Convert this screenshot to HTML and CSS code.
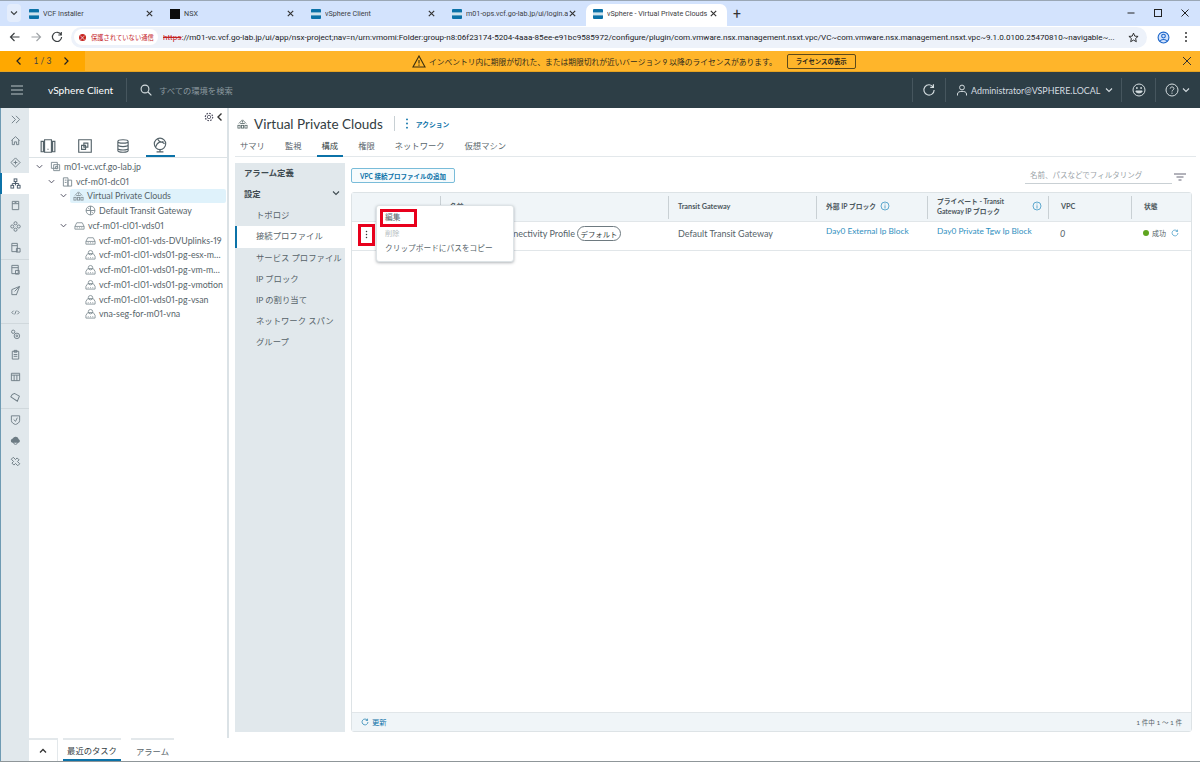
FILE: index.html
```html
<!DOCTYPE html>
<html lang="ja">
<head>
<meta charset="utf-8">
<title>vSphere - Virtual Private Clouds</title>
<link rel="stylesheet" href="styles.css">
</head>
<body>
<svg class="defs" width="0" height="0">
  <symbol id="chev-d" viewBox="0 0 10 10"><path d="M2 3.5 5 6.5 8 3.5" fill="none" stroke="currentColor" stroke-width="1.1"/></symbol>
  <symbol id="net" viewBox="0 0 12 12"><g fill="none" stroke="currentColor" stroke-width=".9"><path d="M2 6 6 2l4 4"/><path d="M3.5 6h5M6 3v2"/><rect x="1" y="8" width="2.4" height="3"/><rect x="4.8" y="8" width="2.4" height="3"/><rect x="8.6" y="8" width="2.4" height="3"/></g></symbol>
  <symbol id="pg" viewBox="0 0 12 12"><g fill="none" stroke="currentColor" stroke-width=".9"><path d="M1 8 3 5h6l2 3v3H1z"/><circle cx="6" cy="4" r="2.4"/><path d="M3 9.5h1M5.5 9.5h1M8 9.5h1"/></g></symbol>
  <symbol id="sw" viewBox="0 0 12 12"><g fill="none" stroke="currentColor" stroke-width=".9"><path d="M1 7 3 3h6l2 4v3H1zM1 7h10M3 8.5h1M5.5 8.5h1M8 8.5h1"/></g></symbol>
  <symbol id="refresh" viewBox="0 0 12 12"><path d="M9.6 3.4A4.4 4.4 0 1 0 10.4 6M9.8 1v2.7H7.1" fill="none" stroke="currentColor" stroke-width="1"/></symbol>
  <symbol id="info" viewBox="0 0 12 12"><g fill="none" stroke="currentColor" stroke-width=".9"><circle cx="6" cy="6" r="4.8"/><path d="M6 5.2V9M6 3v1.1"/></g></symbol>
  <symbol id="close" viewBox="0 0 10 10"><path d="M2 2l6 6M8 2 2 8" fill="none" stroke="currentColor" stroke-width="1.3"/></symbol>
  <symbol id="vmw" viewBox="0 0 10 10"><rect width="10" height="10" rx="1" fill="#0b72a8"/><rect y="3.4" width="10" height="3" fill="#fff" opacity=".8"/></symbol>
</svg>

<div class="tabstrip">
  <span class="tab-list"><svg class="ico10"><use href="#chev-d"/></svg></span>
  <div class="tab"><svg class="fav"><use href="#vmw"/></svg><span class="tab-title">VCF Installer</span><svg class="tab-x"><use href="#close"/></svg></div>
  <div class="tab"><span class="fav fav-nsx"></span><span class="tab-title">NSX</span><svg class="tab-x"><use href="#close"/></svg></div>
  <div class="tab"><svg class="fav"><use href="#vmw"/></svg><span class="tab-title">vSphere Client</span><svg class="tab-x"><use href="#close"/></svg></div>
  <div class="tab"><svg class="fav"><use href="#vmw"/></svg><span class="tab-title">m01-ops.vcf.go-lab.jp/ui/login.a</span><svg class="tab-x"><use href="#close"/></svg></div>
  <div class="tab tab-active"><svg class="fav"><use href="#vmw"/></svg><span class="tab-title">vSphere - Virtual Private Clouds</span><svg class="tab-x"><use href="#close"/></svg></div>
  <span class="tab-new">+</span>
  <div class="win-ctrls">
    <svg class="ico10" viewBox="0 0 10 10"><path d="M1.5 5h7" stroke="#222" fill="none"/></svg>
    <svg class="ico10" viewBox="0 0 10 10"><rect x="1.5" y="1.5" width="7" height="7" fill="none" stroke="#222"/></svg>
    <svg class="ico10" viewBox="0 0 10 10"><path d="M1.5 1.5l7 7M8.5 1.5l-7 7" stroke="#222" fill="none"/></svg>
  </div>
</div>

<div class="addr-row">
  <svg class="nav-ico" viewBox="0 0 12 12"><path d="M10.5 6h-9M5.5 2 1.5 6l4 4" fill="none" stroke="#3c4043" stroke-width="1.2"/></svg>
  <svg class="nav-ico" viewBox="0 0 12 12"><path d="M1.5 6h9M6.5 2l4 4-4 4" fill="none" stroke="#a0a4a8" stroke-width="1.2"/></svg>
  <svg class="nav-ico" viewBox="0 0 12 12"><path d="M10 3.6A4.6 4.6 0 1 0 10.6 6M10.3 1v3H7.3" fill="none" stroke="#3c4043" stroke-width="1.2"/></svg>
  <div class="omnibox">
    <span class="chip"><span class="chip-dot">×</span>保護されていない通信</span>
    <span class="url"><s class="url-s">https</s>://m01-vc.vcf.go-lab.jp/ui/app/nsx-project;nav=n/urn:vmomi:Folder:group-n8:06f23174-5204-4aaa-85ee-e91bc9585972/configure/plugin/com.vmware.nsx.management.nsxt.vpc/VC~com.vmware.nsx.management.nsxt.vpc~9.1.0.0100.25470810~navigable~...</span>
    <svg class="star" viewBox="0 0 12 12"><path d="M6 1.2 7.4 4.5 11 4.8 8.3 7.1 9.1 10.6 6 8.8 2.9 10.6 3.7 7.1 1 4.8 4.6 4.5z" fill="none" stroke="#222" stroke-width="1"/></svg>
  </div>
  <svg class="profile" viewBox="0 0 12 12"><circle cx="6" cy="6" r="5" fill="#d3e3fd" stroke="#1a65c9"/><circle cx="6" cy="4.7" r="1.7" fill="none" stroke="#1a65c9"/><path d="M2.8 9.4C4 7.4 8 7.4 9.2 9.4" fill="none" stroke="#1a65c9"/></svg>
  <svg class="kebab-chrome" viewBox="0 0 4 12"><circle cx="2" cy="2" r="1" fill="#333"/><circle cx="2" cy="6" r="1" fill="#333"/><circle cx="2" cy="10" r="1" fill="#333"/></svg>
</div>

<div class="banner">
  <div class="pager">
    <svg class="ico10" viewBox="0 0 10 10"><path d="M6.5 1.5 3 5l3.5 3.5" fill="none" stroke="#222" stroke-width="1.2"/></svg>
    <span class="pager-num">1 / 3</span>
    <svg class="ico10" viewBox="0 0 10 10"><path d="M3.5 1.5 7 5 3.5 8.5" fill="none" stroke="#222" stroke-width="1.2"/></svg>
  </div>
  <div class="banner-msg">
    <svg class="warn" viewBox="0 0 14 13"><path d="M7 1 13 12H1zM7 5v3.6M7 9.6v1.2" fill="none" stroke="#3a2f10" stroke-width="1.1"/></svg>
    <span>インベントリ内に期限が切れた、または期限切れが近いバージョン 9 以降のライセンスがあります。</span>
    <button class="banner-btn">ライセンスの表示</button>
  </div>
  <svg class="banner-x" viewBox="0 0 10 10"><path d="M1 1l8 8M9 1 1 9" stroke="#333" fill="none" stroke-width="1"/></svg>
</div>

<header class="hdr">
  <svg class="burger" viewBox="0 0 12 10"><path d="M0 1h12M0 5h12M0 9h12" stroke="#c9d2d6" fill="none" stroke-width=".9"/></svg>
  <span class="brand">vSphere Client</span>
  <svg class="hdr-search" viewBox="0 0 12 12"><circle cx="5" cy="5" r="3.9" fill="none" stroke="#d5dde0" stroke-width="1.1"/><path d="M8 8l3.4 3.4" stroke="#d5dde0" stroke-width="1.1"/></svg>
  <span class="hdr-ph">すべての環境を検索</span>
  <span class="hdr-cell hdr-refresh"><svg class="ico14"><use href="#refresh"/></svg></span>
  <span class="hdr-cell hdr-user">
    <svg class="ico12" viewBox="0 0 12 12"><circle cx="6" cy="3.5" r="2.4" fill="none" stroke="currentColor"/><path d="M1.5 11.5V10C1.5 8 3.5 7.4 6 7.4S10.5 8 10.5 10v1.5" fill="none" stroke="currentColor"/></svg>
    <span class="user-name">Administrator@VSPHERE.LOCAL</span>
    <svg class="ico10"><use href="#chev-d"/></svg>
  </span>
  <span class="hdr-cell hdr-smile">
    <svg class="ico14" viewBox="0 0 14 14"><g fill="none" stroke="currentColor"><circle cx="7" cy="7" r="6"/><path d="M3.8 8h6.4C10 10.5 4 10.5 3.8 8z" fill="currentColor"/></g><circle cx="4.9" cy="5" r=".9" fill="currentColor"/><circle cx="9.1" cy="5" r=".9" fill="currentColor"/></svg>
  </span>
  <span class="hdr-help">
    <svg class="ico14" viewBox="0 0 14 14"><circle cx="7" cy="7" r="6" fill="none" stroke="currentColor"/><path d="M5.2 5.6C5.2 3.4 8.9 3.4 8.9 5.5 8.9 7 7 6.9 7 8.5M7 9.6v1.2" fill="none" stroke="currentColor"/></svg>
    <svg class="ico10"><use href="#chev-d"/></svg>
  </span>
</header>

<div class="main">
  <nav class="rail">
    <span class="rail-item rail-toggle"><svg viewBox="0 0 12 12"><path d="M2 2l4 4-4 4M6.5 2l4 4-4 4" fill="none" stroke="currentColor"/></svg></span>
    <span class="rail-item"><svg viewBox="0 0 12 12"><path d="M1.5 6 6 1.8 10.5 6M2.5 5.500V10.500H4.800V7.500H7.200V10.500H9.500V5.500" fill="none" stroke="currentColor"/></svg></span>
    <span class="rail-item"><svg viewBox="0 0 12 12"><path d="M6 1l5 5-5 5-5-5z" fill="none" stroke="currentColor"/><path d="M4 6h4M6 4v4" stroke="currentColor"/></svg></span>
    <span class="rail-item rail-active"><svg viewBox="0 0 12 12"><g fill="none" stroke="#456" stroke-width="1"><rect x="4.5" y="1" width="3" height="3"/><rect x="1" y="8" width="3" height="3"/><rect x="8" y="8" width="3" height="3"/><path d="M6 4v2M2.5 8V6h7v2M6 6v2"/></g></svg></span>
    <span class="rail-item"><svg viewBox="0 0 12 12"><path d="M2.5 1.5h7v9h-7zM2.5 4h7M5 2.8h2" fill="none" stroke="currentColor"/></svg></span>
    <span class="rail-item"><svg viewBox="0 0 12 12"><g fill="none" stroke="currentColor"><circle cx="6" cy="2.5" r="1.7"/><circle cx="6" cy="9.5" r="1.7"/><circle cx="2.5" cy="6" r="1.7"/><circle cx="9.5" cy="6" r="1.7"/></g></svg></span>
    <span class="rail-item"><svg viewBox="0 0 12 12"><path d="M2 1.5h6v9H2zM2 4h6M7 7h4v4H7z" fill="none" stroke="currentColor"/></svg></span>
    <span class="rail-item rail-sep"><svg viewBox="0 0 12 12"><path d="M2 1.5h7v9H2zM2 4h7M6 7h4v4H6z" fill="none" stroke="currentColor"/></svg></span>
    <span class="rail-item"><svg viewBox="0 0 12 12"><path d="M2 5v5.5h5.500M2 5l8.500-3.500L7 10.500M5 7l5-5" fill="none" stroke="currentColor"/></svg></span>
    <span class="rail-item"><svg viewBox="0 0 12 12"><path d="M4 4 2 6l2 2M8 4l2 2-2 2M6.800 4 5.200 8" fill="none" stroke="currentColor"/></svg></span>
    <span class="rail-item rail-sep"><svg viewBox="0 0 12 12"><g fill="none" stroke="currentColor"><circle cx="3.5" cy="3" r="1.8"/><circle cx="7.5" cy="7.5" r="3"/><circle cx="7.5" cy="7.5" r="1"/></g></svg></span>
    <span class="rail-item"><svg viewBox="0 0 12 12"><path d="M2.5 2.5h7v8.500h-7zM4.500 1.500h3v2h-3zM4 6h4M4 8h4" fill="none" stroke="currentColor"/></svg></span>
    <span class="rail-item"><svg viewBox="0 0 12 12"><path d="M1.5 2.5h9v8h-9zM1.500 4.500h9M4.500 4.500v6M7.500 4.500v6" fill="none" stroke="currentColor"/></svg></span>
    <span class="rail-item"><svg viewBox="0 0 12 12"><path d="M1.5 3.5 4 1.500h2.500l4 4.500-4 4.500z" fill="none" stroke="currentColor" transform="rotate(-20 6 6)"/></svg></span>
    <span class="rail-item rail-sep"><svg viewBox="0 0 12 12"><path d="M1.5 2h9v5C10.500 9.500 8 10.800 6 11.500 4 10.800 1.500 9.500 1.500 7zM4 6l2 2 2-4" fill="none" stroke="currentColor"/></svg></span>
    <span class="rail-item"><svg viewBox="0 0 12 12"><path d="M2.5 8.5A2.500 2.500 0 0 1 3 3.700 3.500 3.500 0 0 1 9.500 4.500 2.200 2.200 0 0 1 9.500 8.500z" fill="currentColor"/><circle cx="6" cy="8" r="2.2" fill="none" stroke="currentColor"/></svg></span>
    <span class="rail-item"><svg viewBox="0 0 12 12"><path d="M4.5 2h3v2.500H11v3H7.500V10h-3V7.500H1v-3h3.500z" fill="none" stroke="currentColor" transform="rotate(45 6 6)"/></svg></span>
  </nav>

  <aside class="tree-panel">
    <div class="tree-top">
      <svg class="ico10 tree-gear" viewBox="0 0 12 12"><g fill="none" stroke="#556"><circle cx="6" cy="6" r="2"/><circle cx="6" cy="6" r="4.4" stroke-dasharray="2 1.4" stroke-width="1.5"/></g></svg>
      <svg class="ico10" viewBox="0 0 10 10"><path d="M6.5 1.5 3 5l3.5 3.5" fill="none" stroke="#333" stroke-width="1.4"/></svg>
    </div>
    <div class="tree-tabs">
      <span class="tree-tab"><svg viewBox="0 0 14 14"><path d="M1 3h2v9H1zM11 3h2v9h-2zM4 1.5h6v11H4zM7 9.5v.8" fill="none" stroke="currentColor"/></svg></span>
      <span class="tree-tab"><svg viewBox="0 0 14 14"><path d="M1.5 1.5h11v11h-11zM6 4.500h3.500V8H6zM4 6.500h3.500V10H4z" fill="none" stroke="currentColor"/></svg></span>
      <span class="tree-tab"><svg viewBox="0 0 14 14"><path d="M2.5 3c0-2 9-2 9 0v8c0 2-9 2-9 0zM2.500 3c0 2 9 2 9 0M2.500 6c0 2 9 2 9 0M2.500 9c0 2 9 2 9 0" fill="none" stroke="currentColor"/></svg></span>
      <span class="tree-tab tree-tab-on"><svg viewBox="0 0 14 14"><g fill="none" stroke="currentColor"><circle cx="7" cy="6" r="5"/><path d="M3 9c2-5 5-6 8-3M5 2c1 2 3 3 5 2M4 13h6M7 11v2"/></g></svg></span>
    </div>
    <ul class="tree">
      <li class="node"><svg class="tw"><use href="#chev-d"/></svg><svg class="ni" viewBox="0 0 12 12"><path d="M1.5 1.5h6.500v6.500H1.500zM4 4h6.500v6.500H4zM6 6h2.500v2.500H6z" fill="none" stroke="currentColor"/></svg><span>m01-vc.vcf.go-lab.jp</span></li>
      <li class="node lv1"><svg class="tw"><use href="#chev-d"/></svg><svg class="ni" viewBox="0 0 12 12"><path d="M1.5 2h5v9h-5zM6.500 4.500h4V11h-4zM3 4.500h2M3 7h2" fill="none" stroke="currentColor"/></svg><span>vcf-m01-dc01</span></li>
      <li class="node lv2 node-sel"><svg class="tw"><use href="#chev-d"/></svg><svg class="ni"><use href="#net"/></svg><span>Virtual Private Clouds</span></li>
      <li class="node lv3"><svg class="ni" viewBox="0 0 12 12"><g fill="none" stroke="currentColor"><circle cx="6" cy="6" r="4.8"/><path d="M6 1.200v9.600M1.200 6h9.600M3.500 3.500l1.500 1M8.500 8.500 7 7.500"/></g></svg><span>Default Transit Gateway</span></li>
      <li class="node lv2"><svg class="tw"><use href="#chev-d"/></svg><svg class="ni"><use href="#sw"/></svg><span>vcf-m01-cl01-vds01</span></li>
      <li class="node lv3"><svg class="ni"><use href="#sw"/></svg><span>vcf-m01-cl01-vds-DVUplinks-19</span></li>
      <li class="node lv3"><svg class="ni"><use href="#pg"/></svg><span class="clip">vcf-m01-cl01-vds01-pg-esx-mgmt-long</span></li>
      <li class="node lv3"><svg class="ni"><use href="#pg"/></svg><span class="clip">vcf-m01-cl01-vds01-pg-vm-mgmt-long</span></li>
      <li class="node lv3"><svg class="ni"><use href="#pg"/></svg><span>vcf-m01-cl01-vds01-pg-vmotion</span></li>
      <li class="node lv3"><svg class="ni"><use href="#pg"/></svg><span>vcf-m01-cl01-vds01-pg-vsan</span></li>
      <li class="node lv3"><svg class="ni"><use href="#pg"/></svg><span>vna-seg-for-m01-vna</span></li>
    </ul>
  </aside>

  <section class="content">
    <div class="title-row">
      <svg class="title-ico"><use href="#net"/></svg>
      <h1 class="title">Virtual Private Clouds</h1>
      <span class="title-sep"></span>
      <svg class="title-dots" viewBox="0 0 4 12"><circle cx="2" cy="1.5" r="1" fill="#0b72a8"/><circle cx="2" cy="6" r="1" fill="#0b72a8"/><circle cx="2" cy="10.5" r="1" fill="#0b72a8"/></svg>
      <span class="title-act">アクション</span>
    </div>
    <div class="obj-tabs">
      <span class="obj-tab">サマリ</span>
      <span class="obj-tab">監視</span>
      <span class="obj-tab obj-tab-on">構成</span>
      <span class="obj-tab">権限</span>
      <span class="obj-tab">ネットワーク</span>
      <span class="obj-tab">仮想マシン</span>
    </div>
    <div class="cfg">
      <nav class="subnav">
        <div class="sn sn-head">アラーム定義</div>
        <div class="sn sn-head sn-group">設定<svg class="ico10"><use href="#chev-d"/></svg></div>
        <div class="sn">トポロジ</div>
        <div class="sn sn-on">接続プロファイル</div>
        <div class="sn">サービス プロファイル</div>
        <div class="sn">IP ブロック</div>
        <div class="sn">IP の割り当て</div>
        <div class="sn">ネットワーク スパン</div>
        <div class="sn">グループ</div>
      </nav>
      <div class="pane">
        <div class="toolbar">
          <button class="add-btn">VPC 接続プロファイルの追加</button>
          <span class="filter">名前、パスなどでフィルタリング</span>
          <svg class="filter-ico" viewBox="0 0 12 8"><path d="M0 1h12M2.5 4h7M4.5 7h3" stroke="#667" fill="none"/></svg>
        </div>
        <div class="grid">
          <div class="g-head">
            <div class="gh gh-0"></div>
            <div class="gh gh-ja">名前</div>
            <div class="gh">Transit Gateway</div>
            <div class="gh gh-ja">外部 IP ブロック<svg class="ico10 gh-info"><use href="#info"/></svg></div>
            <div class="gh gh-ja gh-wrap"><span>プライベート - Transit Gateway IP ブロック</span><svg class="ico10 gh-info"><use href="#info"/></svg></div>
            <div class="gh gh-pad">VPC</div>
            <div class="gh gh-ja gh-pad">状態</div>
          </div>
          <div class="g-row">
            <div class="gc gc-0"></div>
            <div class="gc gc-name"><span>Default VPC Connectivity Profile</span><span class="pill">デフォルト</span></div>
            <div class="gc gc-plain">Default Transit Gateway</div>
            <div class="gc gc-link">Day0 External Ip Block</div>
            <div class="gc gc-link">Day0 Private Tgw Ip Block</div>
            <div class="gc gc-num">0</div>
            <div class="gc gc-status"><span class="ok-dot"></span>成功<svg class="ico8"><use href="#refresh"/></svg></div>
          </div>
          <div class="g-fill"></div>
          <div class="g-foot">
            <span class="foot-left"><svg class="ico8"><use href="#refresh"/></svg>更新</span>
            <span class="foot-right">1 件中 1 ～ 1 件</span>
          </div>
          <div class="menu">
            <div class="mi">編集</div>
            <div class="mi mi-off">削除</div>
            <div class="mi">クリップボードにパスをコピー</div>
          </div>
          <svg class="row-dots" viewBox="0 0 4 12"><circle cx="2" cy="2" r="1" fill="#333"/><circle cx="2" cy="6" r="1" fill="#333"/><circle cx="2" cy="10" r="1" fill="#333"/></svg>
          <span class="mark mark-edit"></span>
          <span class="mark mark-dots"></span>
        </div>
      </div>
    </div>
  </section>
</div>

<footer class="tasks">
  <span class="tasks-rail"></span>
  <span class="tasks-up"><svg class="ico10" viewBox="0 0 10 10"><path d="M2 6.5 5 3.5 8 6.5" fill="none" stroke="#333" stroke-width="1.3"/></svg></span>
  <span class="task-tab task-tab-on">最近のタスク</span>
  <span class="task-tab">アラーム</span>
</footer>
</body>
</html>
```
FILE: styles.css
```css
* { box-sizing: border-box; }
html, body { margin: 0; padding: 0; }
body {
  width: 1200px; height: 762px; overflow: hidden;
  display: flex; flex-direction: column;
  background: #fff; color: #4a5459;
  font-family: "Lato", "Noto Sans CJK JP", sans-serif;
  font-size: 9.5px;
}
.defs { position: absolute; }
.ico8 { width: 8px; height: 8px; }
.ico10 { width: 10px; height: 10px; }
.ico12 { width: 12px; height: 12px; }
.ico14 { width: 14px; height: 14px; }

/* browser chrome */
.tabstrip { height: 26px; flex: none; background: #d3e3fd; border-top: 1px solid #9aa7b5; display: flex; align-items: flex-end; padding-left: 7px; position: relative; font-family: "Roboto", "Noto Sans CJK JP", sans-serif; color: #3c4043; }
.tab-list { width: 14px; height: 18px; margin: 0 1px 4px 0; display: flex; align-items: center; justify-content: center; background: #e4edfc; border-radius: 4px; flex: none; }
.tab { width: 141px; height: 22px; flex: none; display: flex; align-items: center; padding: 0 9px 3px 7px; font-size: 7.2px; }
.tab-active { background: #fff; border-radius: 7px 7px 0 0; }
.fav { width: 10px; height: 10px; flex: none; margin-right: 4px; }
.fav-nsx { background: #0c0c0c; }
.tab-title { flex: 1; white-space: nowrap; overflow: hidden; }
.tab-x { width: 9px; height: 9px; flex: none; color: #333; }
.tab-new { font-size: 14px; margin: 0 0 4px 6px; line-height: 16px; color: #333; }
.win-ctrls { position: absolute; right: 10px; top: 7px; display: flex; gap: 17px; }
.addr-row { height: 25px; flex: none; background: #fff; display: flex; align-items: center; padding: 0 0 3px 9px; font-family: "Roboto", "Noto Sans CJK JP", sans-serif; }
.nav-ico { width: 12px; height: 12px; margin-right: 9px; flex: none; }
.omnibox { width: 1076px; height: 21px; margin-left: -1px; border-radius: 11px; background: #edf2fa; display: flex; align-items: center; padding: 0 8px 0 3px; }
.chip { background: #fff; height: 16px; border-radius: 8px; padding: 0 4px; width: 84px; display: flex; align-items: center; color: #c5221f; font-size: 6.3px; white-space: nowrap; font-family: "Noto Sans CJK JP", sans-serif; flex: none; }
.chip-dot { width: 7px; height: 7px; border-radius: 50%; background: #c5221f; color: #fff; font-size: 7px; line-height: 7px; text-align: center; margin: 0 5px 0 1px; flex: none; }
.url { margin-left: 5px; font-size: 8.1px; color: #202124; white-space: nowrap; overflow: hidden; flex: 1; }
.url-s { color: #c5221f; }
.star { width: 11px; height: 11px; margin-left: 8px; flex: none; }
.profile { width: 13px; height: 13px; margin-left: 10px; flex: none; }
.kebab-chrome { width: 4px; height: 12px; margin-left: 14px; flex: none; }

.banner { height: 21px; flex: none; background: #ffb52a; display: flex; align-items: center; color: #2e2a1d; border-bottom: 1px solid #e6a321; }
.pager { width: 85px; height: 100%; background: #ffa800; display: flex; align-items: center; justify-content: space-between; padding: 0 14px; color: #222; flex: none; }
.pager-num { font-size: 8.5px; color: #444; }
.banner-msg { display: flex; align-items: center; margin-left: 327px; font-size: 7.74px; white-space: nowrap; }
.warn { width: 14px; height: 13px; margin-right: 3px; flex: none; }
.banner-btn { margin-left: 10px; width: 69px; height: 15px; padding: 0; background: transparent; border: 1px solid #5d4a1a; border-radius: 2px; font: 700 6.4px "Noto Sans CJK JP", sans-serif; color: #2e2a1d; }
.banner-x { width: 10px; height: 10px; margin-left: auto; margin-right: 8px; }

.hdr { height: 36px; flex: none; background: #2d3e46; color: #d5dde0; display: flex; align-items: center; }
.burger { width: 12px; height: 10px; margin-left: 11px; flex: none; }
.brand { margin-left: 25px; width: 79px; height: 24px; line-height: 24px; border-right: 1px solid #46565e; font-size: 10.2px; color: #fff; flex: none; }
.hdr-search { width: 12px; height: 12px; margin-left: 13px; flex: none; }
.hdr-ph { margin-left: 7px; font-size: 8.3px; color: #8a989e; flex: 1; }
.hdr-cell { height: 24px; display: flex; align-items: center; border-left: 1px solid #46565e; flex: none; }
.hdr-refresh { width: 33px; justify-content: center; }
.hdr-user { width: 176px; padding-left: 10px; gap: 3px; }
.user-name { font-size: 8.9px; width: 130px; white-space: nowrap; }
.hdr-smile { width: 34px; justify-content: center; }
.hdr-help { height: 24px; width: 45px; border-left: 1px solid #46565e; display: flex; align-items: center; padding-left: 9px; gap: 2px; flex: none; }

.main { flex: 1; min-height: 0; display: flex; }
.rail { width: 29px; flex: none; background: #e1e8ec; border-left: 1px solid #6f9bb3; color: #6d7c84; display: flex; flex-direction: column; }
.rail-item { height: 21.4px; display: flex; align-items: center; justify-content: center; flex: none; }
.rail-toggle { height: 22.3px; }
.rail-item svg { width: 11px; height: 11px; }
.rail-active { background: #fff; border-left: 2px solid #0b72a8; margin-left: -1px; }
.rail-sep { border-top: 1px solid #d0d8dc; }
.tree-panel { width: 200px; flex: none; background: #fff; border-right: 2px solid #dbe2e6; display: flex; flex-direction: column; }
.tree-top { height: 18px; flex: none; display: flex; justify-content: flex-end; align-items: center; padding-right: 2px; }
.tree-gear { margin-right: 1px; }
.tree-tabs { height: 32px; flex: none; display: flex; border-bottom: 1px solid #dde3e6; color: #55636a; }
.tree-tab { width: 29px; margin: 0 4.25px; height: 31px; display: flex; align-items: center; justify-content: center; padding-top: 8px; flex: none; }
.tree-tab svg { width: 16px; height: 16px; }
.tree-tab-on { border-bottom: 2px solid #0b72a8; }
.tree { list-style: none; margin: 0; padding: 1px 0 0; color: #566369; }
.node { height: 14.75px; display: flex; align-items: center; padding-left: 6px; white-space: nowrap; font-size: 8.8px; font-feature-settings: "pnum"; }
.lv1 { padding-left: 18px; }
.lv2 { padding-left: 30px; }
.lv3 { padding-left: 56px; }
.node-sel { background: #dff2fb; margin-left: 41px; padding-left: 0; margin-right: 1px; border-radius: 2px; }
.tw { width: 9px; height: 9px; margin-right: 6px; flex: none; color: #556; }
.node-sel .tw { margin-left: -11px; margin-right: 5px; }
.ni { width: 11px; height: 11px; margin-right: 3px; flex: none; color: #7d8a91; }
.clip { width: 124px; overflow: hidden; text-overflow: ellipsis; }

.content { flex: 1; min-width: 0; display: flex; flex-direction: column; padding: 0 4px 6px 6px; }
.title-row { height: 31px; flex: none; display: flex; align-items: center; padding-left: 2px; }
.title-ico { width: 11px; height: 11px; color: #566; margin-right: 6px; flex: none; }
.title { margin: 0; font-size: 13.5px; font-weight: 400; color: #333d42; white-space: nowrap; }
.title-sep { width: 1px; height: 15px; background: #c8d0d4; margin-left: 11px; }
.title-dots { width: 4px; height: 11px; margin-left: 10px; flex: none; }
.title-act { color: #0b72a8; font-size: 6.8px; margin-left: 7px; font-weight: 700; }
.obj-tabs { height: 18px; flex: none; display: flex; border-bottom: 1px solid #e3e8eb; font-size: 8.3px; color: #5a666c; }
.obj-tab { height: 18px; padding: 0 5px; margin-right: 10px; line-height: 15px; white-space: nowrap; }
.obj-tab-on { border-bottom: 2px solid #0b72a8; color: #333d42; }
.cfg { flex: 1; min-height: 0; display: flex; margin-top: 6px; }
.subnav { width: 110px; flex: none; background: #e1e8ec; color: #566369; font-size: 8.35px; }
.sn { height: 21.15px; display: flex; align-items: center; padding: 0 0 3px 21px; white-space: nowrap; }
.sn-head { padding-left: 9px; font-weight: 700; color: #3e4a50; }
.sn-group { justify-content: space-between; padding-right: 4px; }
.sn-on { background: #fff; border-left: 2px solid #0b72a8; padding-left: 19px; }
.pane { flex: 1; min-width: 0; display: flex; flex-direction: column; padding-left: 6px; }
.toolbar { height: 29px; flex: none; display: flex; padding-top: 5px; position: relative; }
.add-btn { width: 104px; height: 15px; padding: 0; border: 1px solid #79bcd9; border-radius: 2px; background: #f6fbfd; color: #0b72a8; font: 700 6.5px "Lato", "Noto Sans CJK JP", sans-serif; }
.filter { margin-left: auto; margin-right: 24px; margin-top: 1px; width: 147px; height: 15px; padding: 0 0 0 5px; border-bottom: 1px solid #c9d0d4; color: #9aa3a8; font-size: 7.5px; line-height: 14px; white-space: nowrap; }
.filter-ico { position: absolute; right: 10px; top: 10px; width: 12px; height: 8px; }
.grid { flex: 1; min-height: 0; display: flex; flex-direction: column; border: 1px solid #dde3e6; border-radius: 3px; position: relative; margin-right: 4px; }
.g-head, .g-row { display: grid; grid-template-columns: 88px 228px 148px 111px 121px 83px 1fr; flex: none; }
.g-head { height: 29px; background: #f0f5f8; border-bottom: 1px solid #e1e6e9; }
.gh { display: flex; align-items: center; padding: 0 0 3px 9px; border-left: 1px solid #c9d0d4; margin: 3px 0 4px; font-size: 7.3px; font-weight: 700; color: #4c575d; }
.gh-ja { font-size: 6.8px; }
.gh-0 { border-left: none; }
.gh-info { color: #2f8fc0; margin-left: 4px; }
.gh-wrap { line-height: 10px; padding-right: 6px; justify-content: space-between; }
.gh-wrap span { width: 80px; }
.gh-pad { padding-left: 12px; }
.g-row { height: 29px; border-bottom: 1px solid #e1e6e9; font-size: 9px; color: #566369; }
.gc { display: flex; align-items: center; padding-left: 10px; white-space: nowrap; }
.gc-name { justify-content: flex-end; gap: 2px; padding-right: 0; margin-top: -6px; }
.gc-plain { margin-top: -6px; }
.pill { border: 1px solid #6e7a80; border-radius: 8px; height: 15px; width: 44px; font-size: 7.4px; display: flex; align-items: center; justify-content: center; color: #333d42; flex: none; margin-right: 47px; }
.gc-link { color: #2f8fc0; margin-top: -11px; font-size: 8.3px; }
.gc-num { padding-left: 12px; font-style: italic; margin-top: -6px; }
.gc-status { padding-left: 12px; gap: 3px; margin-top: -6px; font-size: 7px; }
.gc-status .ico8 { color: #2f8fc0; margin-left: 2px; }
.ok-dot { width: 6px; height: 6px; border-radius: 50%; background: #5fa51f; flex: none; }
.g-fill { flex: 1; }
.g-foot { height: 19px; flex: none; background: #f0f5f8; border-top: 1px solid #e1e6e9; display: flex; align-items: center; justify-content: space-between; padding: 0 9px; font-size: 7.3px; }
.foot-left { color: #0b72a8; display: flex; align-items: center; gap: 3px; }
.foot-right { color: #566369; font-size: 6.5px; }
.menu { position: absolute; left: 24px; top: 12px; width: 138px; height: 57px; background: #fff; border: 1px solid #dde3e6; border-radius: 3px; box-shadow: 0 1px 3px rgba(60,70,80,.4); padding: 4px 0 0 8px; font-size: 7.7px; color: #566369; }
.mi { height: 15.5px; line-height: 15.5px; white-space: nowrap; }
.mi-off { color: #b6bdc1; font-size: 7.2px; }
.mark { position: absolute; border: 3px solid #e8001c; }
.mark-edit { left: 28px; top: 16px; width: 37px; height: 18px; }
.mark-dots { left: 6px; top: 31px; width: 17px; height: 22px; }
.row-dots { position: absolute; left: 13px; top: 36px; width: 3px; height: 11px; }

.tasks { height: 24px; flex: none; display: flex; align-items: stretch; background: #fff; border-bottom: 1px solid #8f9699; font-size: 8.3px; color: #5a666c; }
.tasks-rail { width: 29px; background: #e1e8ec; border-left: 1px solid #6f9bb3; flex: none; }
.tasks-up { width: 29px; display: flex; align-items: center; justify-content: center; border-right: 1px solid #e3e8eb; border-top: 2px solid #e3e8eb; }
.task-tab { padding: 0 5px; margin: 0 5px; display: flex; align-items: center; border-top: 2px solid #e3e8eb; white-space: nowrap; }
.task-tab-on { width: 58px; justify-content: center; border-bottom: 2px solid #0b72a8; color: #333d42; }
```
